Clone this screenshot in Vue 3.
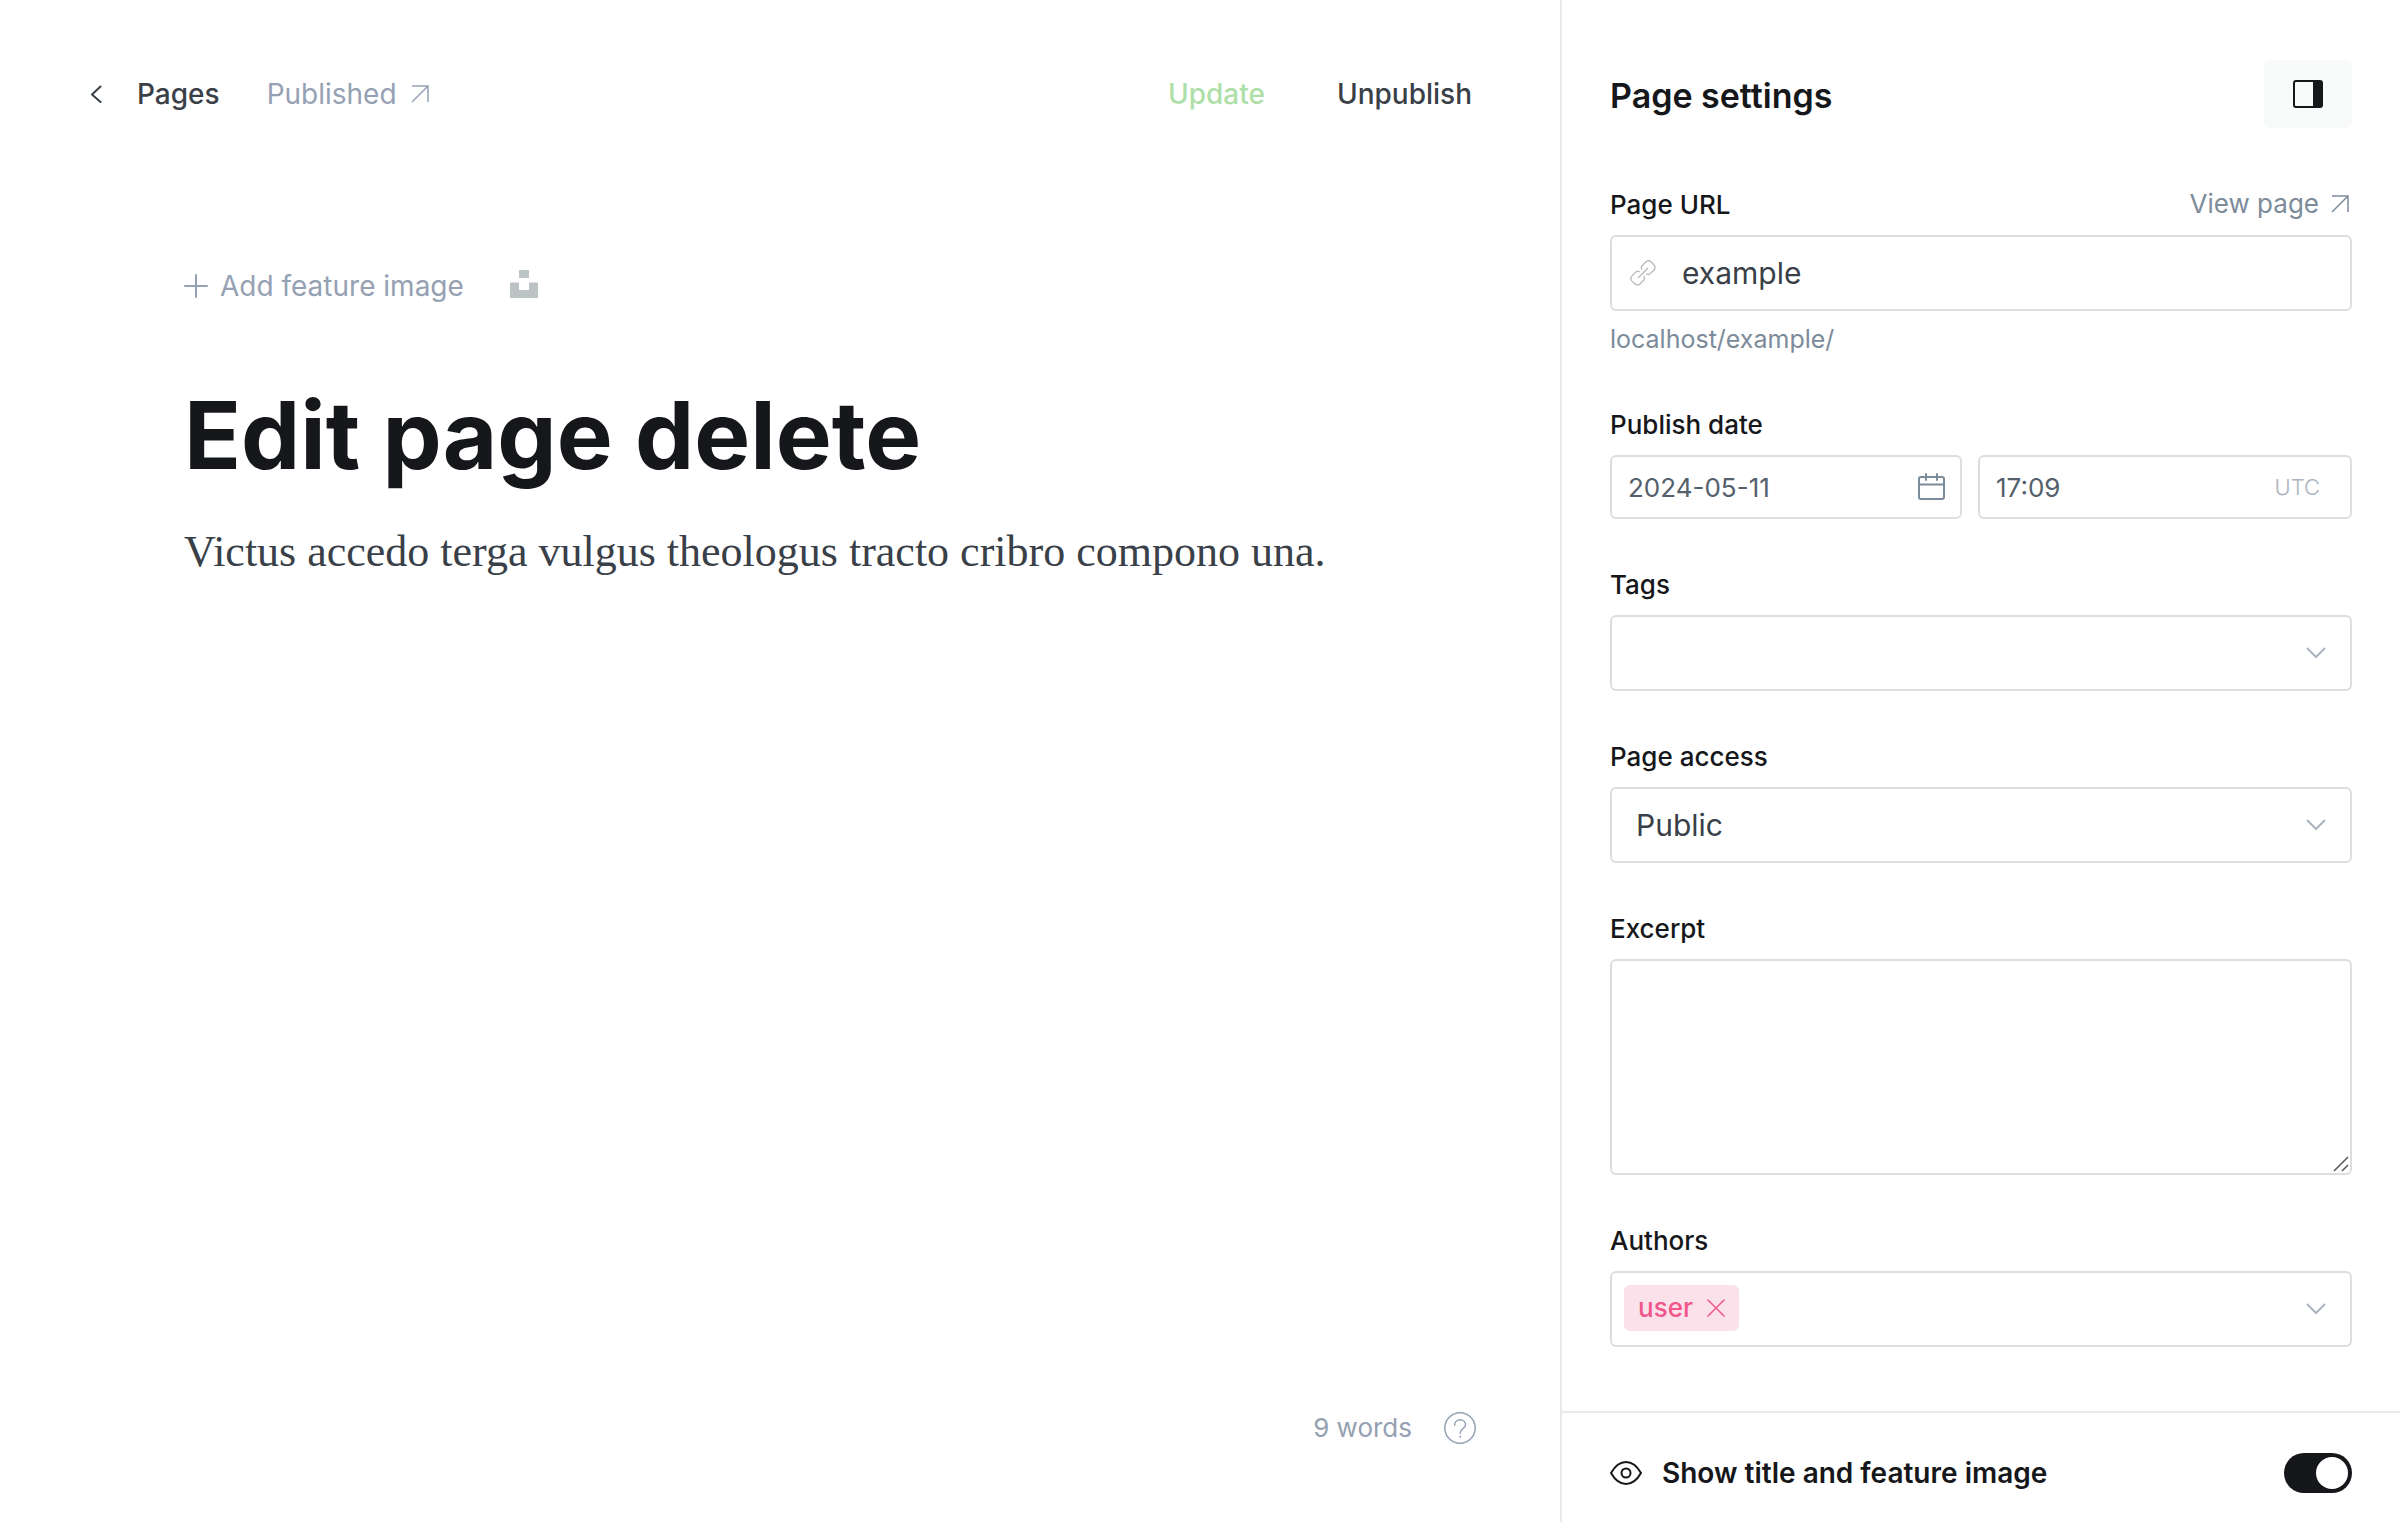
<script setup>
import { ref } from 'vue'

const slug = ref('example')
const date = ref('2024-05-11')
const time = ref('17:09')
const access = ref('Public')
const excerpt = ref('')
const authors = ref(['user'])
const showTitle = ref(true)

function removeAuthor(name) {
  authors.value = authors.value.filter((a) => a !== name)
}
</script>

<template>
  <div class="editor">
    <main class="main">
      <header class="topbar">
        <a class="back" href="#pages">
          <svg width="12" height="18" viewBox="0 0 12 18" fill="none" stroke="currentColor" stroke-width="2" stroke-linecap="round" stroke-linejoin="round"><path d="M10.5 1.500 2 9.500l8.500 7.500" /></svg>
          <span>Pages</span>
        </a>
        <a class="status" href="#published">
          <span>Published</span>
          <svg class="arrow" width="18" height="18" viewBox="0 0 18 18"><path d="M1 1h16v16M17 1 1 17" /></svg>
        </a>
        <div class="actions">
          <button class="action update" type="button">Update</button>
          <button class="action" type="button">Unpublish</button>
        </div>
      </header>

      <article class="canvas">
        <div class="feature">
          <button class="feature-add" type="button">
            <svg width="24" height="24" viewBox="0 0 24 24" fill="none" stroke="currentColor" stroke-width="2" stroke-linecap="round"><path d="M12 1v22M1 12h22" /></svg>
            <span>Add feature image</span>
          </button>
          <button class="unsplash" type="button" aria-label="Unsplash">
            <svg width="28" height="28" viewBox="0 0 28 28" fill="currentColor"><path d="M9 0h10v8H9zM0 12.500h9V20h10v-7.500h9V28H0z" /></svg>
          </button>
        </div>
        <h1 class="title">Edit page delete</h1>
        <p class="body-text">Victus accedo terga vulgus theologus tracto cribro compono una.</p>
      </article>

      <footer class="statusbar">
        <span>9 words</span>
        <button class="help" type="button" aria-label="Help">
          <svg width="32" height="32" viewBox="0 0 32 32" fill="none" stroke="currentColor" stroke-linecap="round"><circle cx="16" cy="16" r="15.200" stroke-width="1.500" /><path d="M10.700 13.200c0-3.200 2.300-5.400 5.400-5.400s5.400 2.100 5.400 4.900c0 4.600-5.300 3.700-5.300 8v.500" stroke-width="1.500" /><circle cx="16.200" cy="24.700" r="1" fill="currentColor" stroke="none" /></svg>
        </button>
      </footer>
    </main>

    <aside class="panel">
      <div class="settings">
        <header class="panel-head">
          <h2>Page settings</h2>
          <button class="panel-toggle" type="button" aria-label="Toggle settings">
            <svg width="30" height="28" viewBox="0 0 30 28"><rect x="1" y="1" width="28" height="26" rx="2" fill="none" stroke="currentColor" stroke-width="2" /><path d="M20 1h8a1 1 0 0 1 1 1v24a1 1 0 0 1-1 1h-8z" fill="currentColor" /></svg>
          </button>
        </header>

        <div class="field">
          <div class="label-row">
            <label for="url">Page URL</label>
            <a class="view" href="#view">
              <span>View page</span>
              <svg class="arrow" width="18" height="18" viewBox="0 0 18 18"><path d="M1 1h16v16M17 1 1 17" /></svg>
            </a>
          </div>
          <div class="box url-box">
            <svg width="26" height="26" viewBox="0 0 26 26" fill="none" stroke="currentColor" stroke-width="1.300" stroke-linecap="round" stroke-linejoin="round"><path d="M8.500 17.500l9-9M11.700 9.200c-.700-1.500-.400-2.700.700-3.800l3.200-3.200c1.700-1.700 3.800-1.800 5.500-.200l2.700 2.800c1.700 1.700 1.600 3.800 0 5.400l-3.300 3.200c-1.100 1.100-2.300 1.400-3.800.700M9.200 11.700c-1.500-.700-2.700-.400-3.800.700l-3.200 3.200c-1.700 1.700-1.800 3.800-.200 5.500l2.800 2.700c1.700 1.700 3.800 1.600 5.400 0l3.200-3.300c1.100-1.100 1.400-2.300.700-3.800" /></svg>
            <input id="url" v-model="slug" type="text" />
          </div>
          <p class="hint">localhost/{{ slug }}/</p>
        </div>

        <div class="field">
          <div class="label-row"><label for="date">Publish date</label></div>
          <div class="datetime">
            <div class="box small date-box">
              <input id="date" v-model="date" type="text" />
              <svg width="28" height="28" viewBox="0 0 28 28" fill="none" stroke="currentColor" stroke-width="2" stroke-linecap="round" stroke-linejoin="round"><rect x="1" y="4" width="25" height="22" rx="2" /><path d="M1 11.500h25M8 1v6M19 1v6" /></svg>
            </div>
            <div class="box small time-box">
              <input v-model="time" type="text" aria-label="Publish time" />
              <span class="zone">UTC</span>
            </div>
          </div>
        </div>

        <div class="field">
          <div class="label-row"><label for="tags">Tags</label></div>
          <div class="box">
            <input id="tags" type="text" />
            <svg class="chevron" width="20" height="12" viewBox="0 0 20 12"><path d="M1 1l9 9 9-9" /></svg>
          </div>
        </div>

        <div class="field">
          <div class="label-row"><label for="access">Page access</label></div>
          <div class="box access-box">
            <select id="access" v-model="access">
              <option>Public</option>
              <option>Members only</option>
            </select>
            <svg class="chevron" width="20" height="12" viewBox="0 0 20 12"><path d="M1 1l9 9 9-9" /></svg>
          </div>
        </div>

        <div class="field">
          <div class="label-row"><label for="excerpt">Excerpt</label></div>
          <div class="excerpt-box">
            <textarea id="excerpt" v-model="excerpt"></textarea>
            <svg class="grip" width="16" height="16" viewBox="0 0 16 16"><path d="M1 15 15 1M9 15l6-6" /></svg>
          </div>
        </div>

        <div class="field">
          <div class="label-row"><label for="authors">Authors</label></div>
          <div class="box authors-box">
            <span v-for="a in authors" :key="a" class="chip">
              <span>{{ a }}</span>
              <button type="button" :aria-label="'Remove ' + a" @click="removeAuthor(a)">
                <svg width="18" height="18" viewBox="0 0 18 18" fill="none" stroke="currentColor" stroke-width="1.500" stroke-linecap="round"><path d="M1 1l16 16M17 1 1 17" /></svg>
              </button>
            </span>
            <input id="authors" type="text" />
            <svg class="chevron" width="20" height="12" viewBox="0 0 20 12"><path d="M1 1l9 9 9-9" /></svg>
          </div>
        </div>
      </div>

      <footer class="panel-foot">
        <label class="show" for="show-title">
          <svg width="32" height="26" viewBox="0 0 32 26" fill="none" stroke="currentColor" stroke-width="2" stroke-linejoin="round"><path d="M1 13C5 6 10 2 16 2s11 4 15 11c-4 7-9 11-15 11S5 20 1 13z" /><circle cx="16" cy="13" r="4.500" /></svg>
          <span>Show title and feature image</span>
        </label>
        <input id="show-title" v-model="showTitle" class="switch" type="checkbox" role="switch" />
      </footer>
    </aside>
  </div>
</template>

<style>
body {
  margin: 0;
  background: #fff;
}
</style>

<style scoped>
.editor {
  display: flex;
  min-height: 100vh;
  font-family: Inter, "Liberation Sans", sans-serif;
  font-size: 28px;
  line-height: 36px;
  color: #15171a;
}

.editor *,
.editor *::before {
  box-sizing: border-box;
}

a {
  color: inherit;
  text-decoration: none;
}

button {
  padding: 0;
  border: 0;
  background: none;
  color: inherit;
  font: inherit;
  cursor: pointer;
}

svg {
  display: block;
  flex: none;
}

.arrow {
  fill: none;
  stroke: currentColor;
  stroke-width: 1.500;
}

.main {
  flex: 1;
  min-width: 0;
  display: flex;
  flex-direction: column;
}

.topbar {
  display: flex;
  align-items: center;
  padding: 76px 88px 0 90px;
}

.back {
  display: flex;
  align-items: center;
  gap: 35px;
  font-weight: 500;
  color: #394047;
}

.status {
  display: flex;
  align-items: center;
  gap: 14px;
  margin-left: 47px;
  color: #95a1b2;
}

.actions {
  display: flex;
  gap: 72px;
  margin-left: auto;
}

.action {
  font-weight: 500;
  color: #394047;
}

.update {
  color: #aedfa9;
}

.canvas {
  flex: 1;
  padding: 156px 184px 0;
}

.feature {
  display: flex;
  align-items: center;
  gap: 46px;
}

.feature-add {
  display: flex;
  align-items: center;
  gap: 12px;
  color: #95a1b2;
}

.unsplash {
  padding-bottom: 4px;
  color: #bbc3c5;
}

.title {
  margin: 78px 0 0;
  font-size: 94px;
  line-height: 106px;
  font-weight: 700;
}

.body-text {
  margin: 32px 0 0;
  font-family: Georgia, "Liberation Serif", serif;
  font-size: 44px;
  line-height: 64px;
  color: #394047;
}

.statusbar {
  display: flex;
  align-items: center;
  justify-content: flex-end;
  gap: 32px;
  padding: 0 84px 76px;
  font-size: 26px;
  color: #95a1b2;
}

.panel {
  flex: none;
  width: 840px;
  display: flex;
  flex-direction: column;
  border-left: 2px solid #e8e9ea;
}

.settings {
  flex: 1;
  padding: 60px 48px 48px;
}

.panel-head {
  display: flex;
  align-items: center;
  justify-content: space-between;
  margin-bottom: 59px;
}

.panel-head h2 {
  margin: 0;
  padding-top: 4px;
  font-size: 34px;
  line-height: 44px;
  font-weight: 600;
}

.panel-toggle {
  display: flex;
  align-items: center;
  justify-content: center;
  width: 88px;
  height: 68px;
  border-radius: 6px;
  background: #f9fafa;
}

.field + .field {
  margin-top: 48px;
}

.label-row {
  display: flex;
  align-items: flex-start;
  justify-content: space-between;
  margin-bottom: 12px;
  font-size: 26px;
}

.label-row label {
  font-weight: 500;
}

.view {
  display: flex;
  align-items: center;
  gap: 12px;
  padding-right: 3px;
  line-height: 34px;
  color: #7c8b9a;
}

.box {
  display: flex;
  align-items: center;
  height: 76px;
  padding: 0 24px 0 14px;
  border: 2px solid #dddedf;
  border-radius: 6px;
}

.box input,
.box select {
  flex: 1;
  width: 0;
  min-width: 0;
  height: 100%;
  padding: 0;
  border: 0;
  outline: 0;
  background: none;
  color: #394047;
  font: inherit;
  font-size: 30px;
  appearance: none;
}

.url-box {
  gap: 26px;
  padding-left: 18px;
  color: #b5b8bb;
}

.hint {
  margin: 8px 0 0;
  font-size: 25px;
  line-height: 40px;
  color: #7c8b9a;
}

.datetime {
  display: grid;
  grid-template-columns: 352fr 374fr;
  gap: 16px;
}

.box.small {
  height: 64px;
  padding: 0 14px 0 16px;
}

.date-box {
  color: #7c8b9a;
}

.box.time-box {
  padding-right: 30px;
}

.box.small input {
  font-size: 26px;
  color: #54606c;
}

.zone {
  font-size: 22px;
  font-weight: 300;
  color: #abb4be;
}

.chevron {
  fill: none;
  stroke: #abb4be;
  stroke-width: 2;
}

.box.access-box {
  position: relative;
  padding: 0;
}

.access-box select {
  padding: 0 48px 0 24px;
}

.access-box .chevron {
  position: absolute;
  right: 24px;
  pointer-events: none;
}

.excerpt-box {
  position: relative;
}

.excerpt-box textarea {
  display: block;
  width: 100%;
  height: 216px;
  padding: 16px 24px;
  border: 2px solid #dddedf;
  border-radius: 6px;
  outline: 0;
  color: #394047;
  font: inherit;
  resize: none;
}

.grip {
  position: absolute;
  right: 3px;
  bottom: 3px;
  fill: none;
  stroke: #54575a;
  stroke-width: 1.500;
  pointer-events: none;
}

.authors-box {
  padding-left: 12px;
}

.chip {
  display: flex;
  align-items: center;
  gap: 14px;
  height: 46px;
  padding: 0 14px;
  margin-bottom: 2px;
  border-radius: 6px;
  background: #fbe1ea;
  color: #f0568c;
  font-size: 26px;
  font-weight: 500;
}

.panel-foot {
  display: flex;
  align-items: center;
  justify-content: space-between;
  padding: 40px 48px 29px;
  border-top: 2px solid #e8e9ea;
}

.show {
  display: flex;
  align-items: center;
  gap: 20px;
  font-weight: 600;
}

.switch {
  display: flex;
  align-items: center;
  width: 68px;
  height: 40px;
  margin: 0;
  padding: 4px;
  border-radius: 20px;
  background: #ced4d9;
  appearance: none;
  cursor: pointer;
}

.switch::before {
  content: "";
  width: 32px;
  height: 32px;
  border-radius: 50%;
  background: #fff;
}

.switch:checked {
  justify-content: flex-end;
  background: #15171a;
}
</style>
